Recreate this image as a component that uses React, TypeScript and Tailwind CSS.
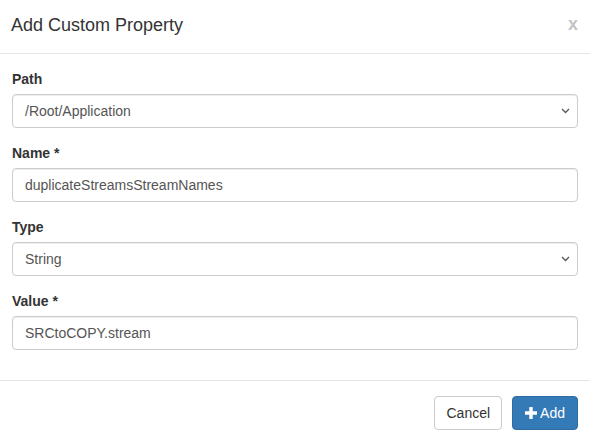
import React from "react";

function Chevron() {
  return (
    <svg width="9" height="6" viewBox="0 0 9 6" className="absolute right-[7px] top-1/2 -translate-y-1/2">
      <path d="M1 1 L4.5 4.5 L8 1" fill="none" stroke="#555" strokeWidth="1.3" />
    </svg>
  );
}

function Field({ label, value, select }: { label: string; value: string; select?: boolean }) {
  return (
    <div className="mb-[15px]">
      <div className="text-[14px] leading-[20px] font-bold text-[#333] mb-[5px]">{label}</div>
      <div className="relative h-[34px] rounded-[4px] border border-[#ccc] bg-white shadow-[inset_0_1px_1px_rgba(0,0,0,0.075)] flex items-center px-[12px] text-[14px] text-[#555]">
        {value}
        {select && <Chevron />}
      </div>
    </div>
  );
}

export default function App() {
  return (
    <div className="w-[590px] h-[441px] overflow-hidden bg-white" style={{ fontFamily: '"Liberation Sans", Arial, sans-serif' }}>
      <div className="flex items-start justify-between pl-[11px] pr-[12px] pt-[12px] pb-[15px] border-b border-[#e5e5e5]">
        <div className="text-[18px] leading-[26px] text-[#333]">Add Custom Property</div>
        <div className="text-[18px] leading-[20px] font-bold text-[#c4c4c4] mt-[2px]">x</div>
      </div>
      <div className="px-[12px] py-[15px]">
        <Field label="Path" value="/Root/Application" select />
        <Field label="Name *" value="duplicateStreamsStreamNames" />
        <Field label="Type" value="String" select />
        <Field label="Value *" value="SRCtoCOPY.stream" />
      </div>
      <div className="border-t border-[#e5e5e5] px-[12px] py-[15px] flex justify-end gap-[10px]">
        <button className="h-[34px] px-[11px] rounded-[4px] border border-[#ccc] bg-white text-[14px] text-[#333]">Cancel</button>
        <button className="h-[34px] px-[12px] rounded-[4px] border border-[#2e6da4] bg-[#337ab7] text-[14px] text-white flex items-center gap-[3px]">
          <svg width="12" height="12" viewBox="0 0 12 12">
            <path d="M4.3 0 H7.7 V4.3 H12 V7.7 H7.7 V12 H4.3 V7.7 H0 V4.3 H4.3 Z" fill="#fff" />
          </svg>
          Add
        </button>
      </div>
    </div>
  );
}
